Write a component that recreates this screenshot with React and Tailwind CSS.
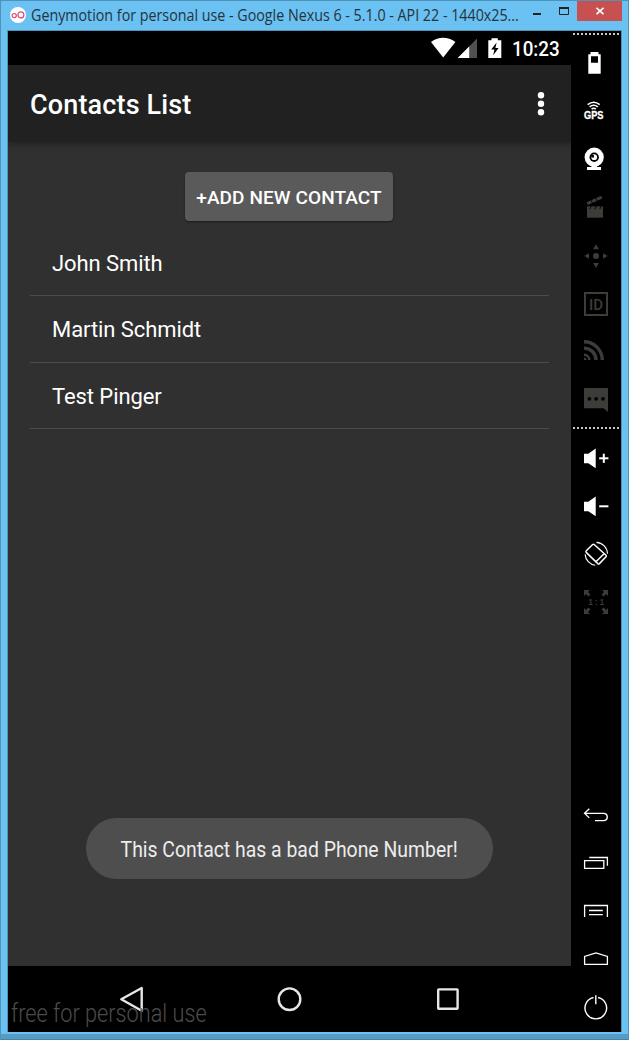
import React from "react";

const contacts = ["John Smith", "Martin Schmidt", "Test Pinger"];

function Cell({ children, dim = false }) {
  return (
    <svg
      viewBox="0 0 50 48"
      className={dim ? "h-12 w-[50px] shrink-0 text-[#3c3c38]" : "h-12 w-[50px] shrink-0 text-white"}
      fill="currentColor"
    >
      {children}
    </svg>
  );
}

function DottedLine() {
  return (
    <div className="mx-0.5 h-0.5 shrink-0 bg-[repeating-linear-gradient(to_right,#c8c8c8_0px,#c8c8c8_2px,#000_2px,#000_4px)]" />
  );
}

function TitleBar() {
  return (
    <header className="flex h-[29px] shrink-0 items-start pl-[9px] pr-[6px]">
      <svg viewBox="0 0 16 16" className="mt-1.5 size-4 shrink-0">
        <circle cx="8" cy="8" r="8" fill="#fff" />
        <g fill="none" stroke="#e0447c" strokeWidth="1.2">
          <circle cx="4.2" cy="8.6" r="2.1" />
          <circle cx="10.9" cy="7.9" r="3" />
        </g>
      </svg>
      <h1 className="ml-[5px] mt-[3px] w-[501px] shrink-0 whitespace-nowrap font-['Open_Sans',sans-serif] text-[16px] leading-[22px] text-[#25333d]">
        <span className="inline-block origin-left scale-x-[0.892]">
          Genymotion for personal use - Google Nexus 6 - 5.1.0 - API 22 - 1440x25...
        </span>
      </h1>
      <svg viewBox="0 0 45 20" className="h-5 w-[45px] shrink-0">
        <path d="M1 12h8v2H1z" fill="#222" />
        <path d="M27.5 7.5h9v6h-9z" fill="none" stroke="#222" />
        <path d="M27 6h10v2H27z" fill="#222" />
      </svg>
      <button className="flex h-5 w-[45px] shrink-0 items-center justify-center bg-[#c75050]">
        <svg viewBox="0 0 8 8" className="size-2" stroke="#fff" strokeWidth="1.7">
          <path d="M.5.8l7 6.4M7.5.8l-7 6.4" />
        </svg>
      </button>
    </header>
  );
}

function StatusBar() {
  return (
    <div className="flex h-[34px] shrink-0 items-start bg-black pl-[423px]">
      <svg viewBox="0 0 72 34" className="h-[34px] w-[72px] shrink-0">
        <path d="M0 11Q12.2 2.6 24.4 11L12.2 26.4z" fill="#fff" />
        <path d="M46 7.5V27H26.7z" fill="#505050" />
        <path d="M38.2 15.4V27H26.7z" fill="#fff" />
        <path d="M57.3 9.3h3.2V7.3h6.3v2h3.5V27h-13z" fill="#fff" />
        <path d="M65.6 11.5l-5.4 7h3.2l-1.2 5.8 5.4-7.3h-3.2z" fill="#000" />
      </svg>
      <span className="ml-[9px] mt-1.5 origin-left scale-x-[0.94] text-[20px] font-medium leading-6 text-white">10:23</span>
    </div>
  );
}

function AppBar() {
  return (
    <div className="z-10 flex h-[77px] shrink-0 items-center justify-between bg-[#212121] pl-[22px] pr-[26px] shadow-[0_2px_7px_rgba(0,0,0,0.35)]">
      <h2 className="mt-[3px] whitespace-nowrap text-[27px] font-medium leading-8 tracking-[0.15px] text-white">Contacts List</h2>
      <svg viewBox="0 0 8 26" className="mt-px h-[26px] w-2" fill="#fff">
        <circle cx="4" cy="4.3" r="3.2" />
        <circle cx="4" cy="12.8" r="3.2" />
        <circle cx="4" cy="21.2" r="3.2" />
      </svg>
    </div>
  );
}

function NavBar() {
  return (
    <div className="relative h-[66px] shrink-0 bg-black">
      <svg viewBox="0 0 563 66" className="h-[66px] w-[563px]" fill="none" stroke="#e6e6e6" strokeWidth="2.4">
        <path d="M113.3 33.2L133.7 22v22.8z" strokeLinejoin="round" />
        <circle cx="281.5" cy="33.2" r="10.8" />
        <rect x="430.2" y="23.4" width="19.4" height="19.4" rx=".6" />
      </svg>
      <span className="absolute left-[3px] top-[32px] origin-left scale-x-[0.835] whitespace-nowrap text-[26px] font-light leading-[30px] text-[#4c4c4c]">
        free for personal use
      </span>
    </div>
  );
}

function Phone() {
  return (
    <main className="flex w-[563px] shrink-0 flex-col overflow-hidden bg-[#303030]">
      <StatusBar />
      <AppBar />
      <section className="flex flex-1 flex-col items-center pt-[30px]">
        <button className="mr-px h-[49px] w-[208px] shrink-0 whitespace-nowrap rounded-sm bg-[#5a5a5b] pt-[3px] text-[19px] font-medium tracking-[0.1px] text-white shadow-[0_1px_2px_rgba(0,0,0,0.45)]">
          +ADD NEW CONTACT
        </button>
        <ul className="mt-[8.5px] w-[519px]">
          {contacts.map((name) => (
            <li
              key={name}
              className="flex h-[66.5px] items-center border-b border-[#4c4c4c] pl-[22px] pt-[3px] text-[22px] leading-7 tracking-[-0.08px] text-white"
            >
              {name}
            </li>
          ))}
        </ul>
        <div className="mb-[87px] mt-auto flex h-[61px] w-[407px] items-center justify-center rounded-full bg-[#4e4e4e] pt-0.5">
          <span className="scale-x-[0.882] whitespace-nowrap text-[22px] leading-7 text-[#ececec]">
            This Contact has a bad Phone Number!
          </span>
        </div>
      </section>
      <NavBar />
    </main>
  );
}

function Volume({ plus = false }) {
  return (
    <Cell>
      <path d="M13 19.7h4.3l7.4-5.3v19.8l-7.4-5H13z" />
      <path d="M28.2 23.3h9.2v2h-9.2z" />
      {plus && <path d="M31.8 19.7h2v9.2h-2z" />}
    </Cell>
  );
}

function Sidebar() {
  return (
    <aside className="flex w-[50px] shrink-0 flex-col bg-black pt-0.5">
      <DottedLine />
      <div className="mt-1 flex flex-col">
        <Cell>
          <path fillRule="evenodd" d="M19.5 13h8v2.2h2.2v19.5H17.3V15.2h2.2zM20 17.3v6.4h7v-6.4z" />
        </Cell>
        <Cell>
          <g fill="none" stroke="currentColor" strokeWidth="1.6">
            <path d="M16.7 17.6q6-4.8 12 0M18.6 19.9q4.1-3.3 8.2 0M20.6 22q2.1-1.6 4.2 0" />
          </g>
          <text x="13" y="32" textLength="19.5" lengthAdjust="spacingAndGlyphs" className="font-['Liberation_Sans',sans-serif] text-[10px] font-bold" stroke="currentColor" strokeWidth=".3">
            GPS
          </text>
        </Cell>
        <Cell>
          <path d="M16 32h14v3H16zM20.5 29h5.5v4h-5.5z" />
          <circle cx="23.2" cy="22.2" r="9.6" />
          <circle cx="23.2" cy="22.2" r="4.7" fill="#000" />
          <circle cx="23.2" cy="22.2" r="2.9" />
          <path d="M20.3 20h2.6v2.6h-2.6z" fill="#000" />
        </Cell>
        <Cell dim>
          <path d="M16 23.3h16v11.4H16z" />
          <path d="M15.6 19.3l14.6-6.6 1.2 2.8-14.6 6.6z" />
          <path d="M19.4 16.5l2.4 4M24.2 14.3l2.4 4M20.3 23l-1.4 3.2M25.3 23l-1.4 3.2M30.2 23l-1.4 3.2" stroke="#000" strokeWidth=".9" />
        </Cell>
        <Cell dim>
          <circle cx="25" cy="25" r="3" />
          <path d="M25 13.2l2.9 5h-5.8zM25 37l2.9-5h-5.8zM13.2 25l4.8-2.8v5.6zM36.8 25L32 22.2v5.6z" />
        </Cell>
        <Cell dim>
          <rect x="14" y="14" width="22" height="22" fill="none" stroke="currentColor" strokeWidth="2" />
          <text x="18" y="30.5" textLength="14" lengthAdjust="spacingAndGlyphs" className="font-['Roboto',sans-serif] text-[15.5px] font-medium">
            ID
          </text>
        </Cell>
        <Cell dim>
          <g fill="none" stroke="currentColor" strokeWidth="3.4">
            <path d="M13 14.8A18.3 18.3 0 0 1 31.3 33M13 21.1A12 12 0 0 1 25 33" />
          </g>
          <path d="M13 26.5A6.5 6.5 0 0 1 19.5 33H17a4 4 0 0 0-4-4zM13 30.5a2.5 2.5 0 0 1 2.5 2.5H13z" />
        </Cell>
        <Cell dim>
          <path d="M13 13h24v24l-4.5-3.7H13z" />
          <g fill="#000">
            <circle cx="18.4" cy="23.8" r="1.9" />
            <circle cx="25.2" cy="23.8" r="1.9" />
            <circle cx="32" cy="23.8" r="1.9" />
          </g>
        </Cell>
      </div>
      <div className="mt-1">
        <DottedLine />
      </div>
      <div className="mt-[5px] flex flex-col">
        <Volume plus />
        <Volume />
        <Cell>
          <g fill="none" stroke="currentColor" strokeWidth="1.5">
            <path d="M15.3 20.8L21.6 14.5q.8-.6 1.6 0L35 25.2q.7.8 0 1.6l-6.6 6.8q-.8.7-1.6 0L15.2 22.4q-.6-.8.1-1.6zM25 31.7l8-8" />
            <path d="M25.5 12.4a11.6 11.6 0 0 1 11 11.3M24.3 35.2a11.6 11.6 0 0 1-10.2-10.8" strokeWidth="1.1" />
          </g>
        </Cell>
        <Cell dim>
          <path d="M13 12h6l-2 2 2.4 2.4-2 2L15 16l-2 2zM37 12v6l-2-2-2.4 2.4-2-2L33 14l-2-2zM13 36v-6l2 2 2.4-2.4 2 2L17 34l2 2zM37 36h-6l2-2-2.4-2.4 2-2L35 32l2-2z" />
          <text x="17.5" y="27.3" textLength="15.5" lengthAdjust="spacingAndGlyphs" className="font-['Liberation_Sans',sans-serif] text-[9px] font-bold">
            1 : 1
          </text>
        </Cell>
      </div>
      <div className="mb-px mt-auto flex flex-col">
        <Cell>
          <path d="M18.3 17.8l-4.8 4.5 4.8 4.6M13.7 22.4h19.5a3.7 3.7 0 0 1 0 7.3H24" fill="none" stroke="currentColor" strokeWidth="1.3" />
        </Cell>
        <Cell>
          <path d="M13.6 21.6h19.2v7.8H13.6zM18.3 18.5h18.1v8.2" fill="none" stroke="currentColor" strokeWidth="1.3" />
        </Cell>
        <Cell>
          <path d="M13.6 30V18.5h22.8V30M18 23.5h13.8M18 27.7h13.8" fill="none" stroke="currentColor" strokeWidth="1.3" />
        </Cell>
        <Cell>
          <path d="M13.6 29.4v-8L25 18l11.4 3.4v8z" fill="none" stroke="currentColor" strokeWidth="1.3" />
        </Cell>
        <Cell>
          <path d="M22.5 14.5a10.8 10.8 0 1 0 4.6 0M24.8 12.3v9" fill="none" stroke="currentColor" strokeWidth="1.4" />
        </Cell>
      </div>
    </aside>
  );
}

export default function App() {
  return (
    <div className="flex h-[1040px] w-[629px] flex-col overflow-hidden border border-b-0 border-[#4f93b9] bg-[#6ac1f2] font-['Roboto',sans-serif]">
      <TitleBar />
      <div className="ml-[6px] flex h-[1002px] w-[615px] shrink-0 border-l border-r border-t border-[#4f93b9] bg-black">
        <Phone />
        <Sidebar />
      </div>
      <div className="h-2 shrink-0 border-b border-t-2 border-b-[#4384aa] border-t-[#6ac1f2] bg-[#559bc4]" />
    </div>
  );
}
